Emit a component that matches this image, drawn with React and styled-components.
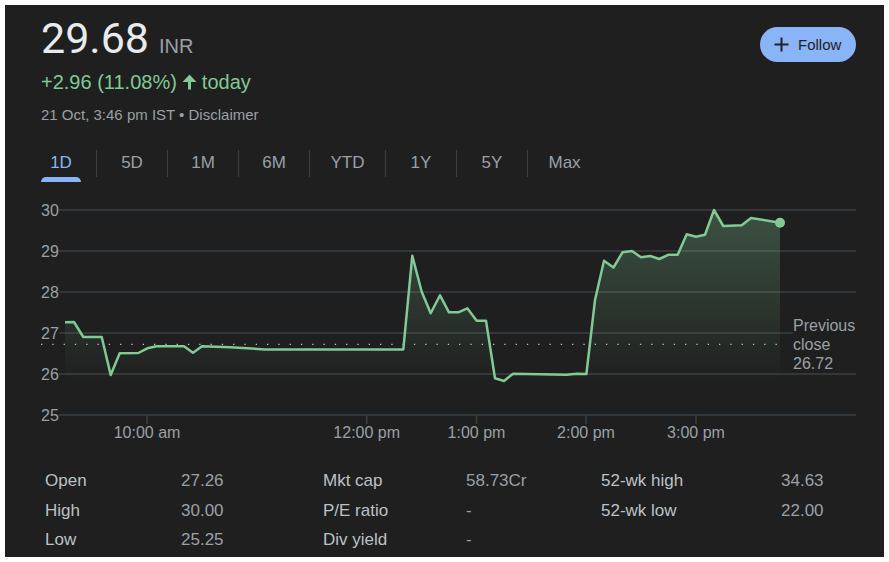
import React from 'react';
import styled, { createGlobalStyle } from 'styled-components';

const GlobalStyle = createGlobalStyle`
  html, body {
    margin: 0;
    background: #fff;
  }
`;

const Card = styled.div`
  box-sizing: border-box;
  width: 879px;
  height: 552px;
  margin: 5px;
  background: #1f1f1f;
  font-family: "Liberation Sans", Arial, sans-serif;
  overflow: hidden;
`;

const Header = styled.header`
  display: flex;
  justify-content: space-between;
  align-items: flex-start;
  padding: 0 28px 0 36px;
`;

const PriceRow = styled.div`
  display: flex;
  align-items: baseline;
  gap: 10px;
  height: 62px;
`;

const Price = styled.span`
  font-family: Roboto, sans-serif;
  font-size: 43px;
  line-height: 67px;
  color: #e8eaed;
`;

const Currency = styled.span`
  font-size: 20px;
  color: #9aa0a6;
`;

const Change = styled.div`
  display: flex;
  align-items: center;
  height: 30px;
  font-size: 20px;
  color: #81c995;
`;

const ArrowIcon = styled.svg`
  width: 15px;
  height: 16px;
  margin: 0 5px;
  fill: #81c995;
`;

const Stamp = styled.div`
  margin-top: 9px;
  font-size: 15px;
  line-height: 18px;
  color: #9aa0a6;
`;

const FollowButton = styled.button`
  display: flex;
  align-items: center;
  gap: 9px;
  width: 96px;
  height: 35px;
  margin-top: 22px;
  padding: 0 0 0 14px;
  border: 0;
  border-radius: 18px;
  background: #8ab4f8;
  color: #202124;
  font-family: inherit;
  font-size: 15px;
`;

const PlusIcon = styled.svg`
  width: 15px;
  height: 15px;
  stroke: #202124;
  stroke-width: 2;
`;

const Tabs = styled.nav`
  display: flex;
  height: 32px;
  margin: 26px 0 0 36px;
`;

const Tab = styled.div`
  display: flex;
  justify-content: center;
  align-items: flex-start;
  box-sizing: border-box;
  height: 27px;
  min-width: 71px;
  padding: 0 20.5px;
  border-right: ${p => (p.$last ? '0' : '1px solid #3c4043')};
  font-size: 17px;
  line-height: 26px;
  color: ${p => (p.$active ? '#8ab4f8' : '#9aa0a6')};

  ${p => p.$active && `
    justify-content: flex-start;
    min-width: 56px;
    padding: 0;
  `}
`;

const ActiveLabel = styled.span`
  position: relative;
  width: 40px;
  text-align: center;

  &::after {
    content: '';
    position: absolute;
    left: 0;
    right: 0;
    top: 27px;
    height: 5px;
    border-radius: 5px 5px 0 0;
    background: #8ab4f8;
  }
`;

const ChartSvg = styled.svg`
  display: block;
  width: 879px;
  height: 270px;
  margin-top: 8px;
`;

const GridLine = styled.line`
  stroke: #3c4043;
  stroke-width: 1.5;
`;

const AxisText = styled.text`
  font-size: 16px;
  fill: #9aa0a6;
`;

const Stats = styled.div`
  display: grid;
  grid-template-columns: 136px 142px 143px 135px 180px 100px;
  grid-auto-rows: 29.5px;
  margin: 6px 0 0 40px;
  font-size: 17px;
  line-height: 29.5px;
`;

const StatLabel = styled.div`
  color: #bdc1c6;
`;

const StatValue = styled.div`
  color: #9aa0a6;
`;

const tabs = ['5D', '1M', '6M', 'YTD', '1Y', '5Y', 'Max'];

// chart points in page pixels, the svg viewBox keeps them there
const points = [
  [65, 322.3], [74, 322], [83.3, 337], [101.7, 337], [110.7, 375], [119.7, 353.3],
  [138.3, 353], [147.3, 348.3], [156.7, 346.3], [184, 346.3], [193, 352.7], [202, 346.3],
  [230, 347.3], [265, 349.4], [403.3, 349.4], [412.3, 255.7], [421.7, 291.7], [430.7, 313.3],
  [440, 295.3], [449, 312.3], [458.3, 312.3], [467.3, 308.3], [476.7, 320.7], [486, 320.7],
  [495, 378.3], [504, 381], [513, 373.7], [566.7, 374.7], [576.7, 373.7], [586.4, 374],
  [595, 300], [604, 260.7], [613.5, 267.5], [622.5, 252.3], [632, 251], [641, 257.3],
  [650.3, 256], [659.3, 259], [668.7, 254.7], [677.7, 254.7], [686.7, 234.3], [696, 236.7],
  [705, 234.7], [714, 210], [723.3, 226], [741.7, 225.3], [751, 218], [780, 222.7],
];

const line = points.map(([x, y]) => `${x},${y}`).join(' ');
const area = `65,380 ${line} 780,380`;
const gridYs = [210, 251, 292, 333, 374, 415];
const yLabels = ['30', '29', '28', '27', '26', '25'];
const ticks = [
  [147, '10:00 am'],
  [366.7, '12:00 pm'],
  [476.5, '1:00 pm'],
  [586, '2:00 pm'],
  [696, '3:00 pm'],
];

const stats = [
  ['Open', '27.26', 'Mkt cap', '58.73Cr', '52-wk high', '34.63'],
  ['High', '30.00', 'P/E ratio', '-', '52-wk low', '22.00'],
  ['Low', '25.25', 'Div yield', '-', '', ''],
];

export default function App() {
  return (
    <>
      <GlobalStyle />
      <Card>
        <Header>
          <div>
            <PriceRow>
              <Price>29.68</Price>
              <Currency>INR</Currency>
            </PriceRow>
            <Change>
              +2.96 (11.08%)
              <ArrowIcon viewBox="0 0 15 16">
                <path d="M7.5 0.5 14.5 8H9V15.5H6V8H0.5Z" />
              </ArrowIcon>
              today
            </Change>
            <Stamp>21 Oct, 3:46 pm IST • Disclaimer</Stamp>
          </div>
          <FollowButton>
            <PlusIcon viewBox="0 0 15 15">
              <path d="M0.5 7.5H14.5M7.5 0.5V14.5" />
            </PlusIcon>
            Follow
          </FollowButton>
        </Header>
        <Tabs>
          <Tab $active>
            <ActiveLabel>1D</ActiveLabel>
          </Tab>
          {tabs.map((t, i) => (
            <Tab key={t} $last={i === tabs.length - 1}>{t}</Tab>
          ))}
        </Tabs>
        <ChartSvg viewBox="5 190 879 270">
          <defs>
            <linearGradient id="fade" gradientUnits="userSpaceOnUse" x1="0" y1="210" x2="0" y2="380">
              <stop offset="0" stopColor="#81c995" stopOpacity="0.3" />
              <stop offset="1" stopColor="#81c995" stopOpacity="0" />
            </linearGradient>
          </defs>
          {gridYs.map(y => (
            <GridLine key={y} x1="59" x2={y === 333 ? 793 : 856} y1={y} y2={y} />
          ))}
          {ticks.map(([x]) => (
            <GridLine key={x} x1={x} x2={x} y1="415" y2="424" />
          ))}
          <polygon points={area} fill="url(#fade)" />
          <line
            x1="41"
            x2="785"
            y1="344.3"
            y2="344.3"
            stroke="#bdc1c6"
            strokeWidth="1.3"
            strokeDasharray="1.3 10"
          />
          <polyline points={line} fill="none" stroke="#81c995" strokeWidth="2.5" strokeLinejoin="round" />
          <circle cx="780" cy="222.7" r="5" fill="#81c995" />
          {yLabels.map((l, i) => (
            <AxisText key={l} x="41" y={gridYs[i] + 5.5}>{l}</AxisText>
          ))}
          {ticks.map(([x, l]) => (
            <AxisText key={l} x={x} y="438" textAnchor="middle">{l}</AxisText>
          ))}
          <AxisText x="793" y="331">Previous</AxisText>
          <AxisText x="793" y="350">close</AxisText>
          <AxisText x="793" y="369">26.72</AxisText>
        </ChartSvg>
        <Stats>
          {stats.flatMap((row, r) =>
            row.map((cell, c) =>
              c % 2 === 0 ? (
                <StatLabel key={`${r}-${c}`}>{cell}</StatLabel>
              ) : (
                <StatValue key={`${r}-${c}`}>{cell}</StatValue>
              )
            )
          )}
        </Stats>
      </Card>
    </>
  );
}
